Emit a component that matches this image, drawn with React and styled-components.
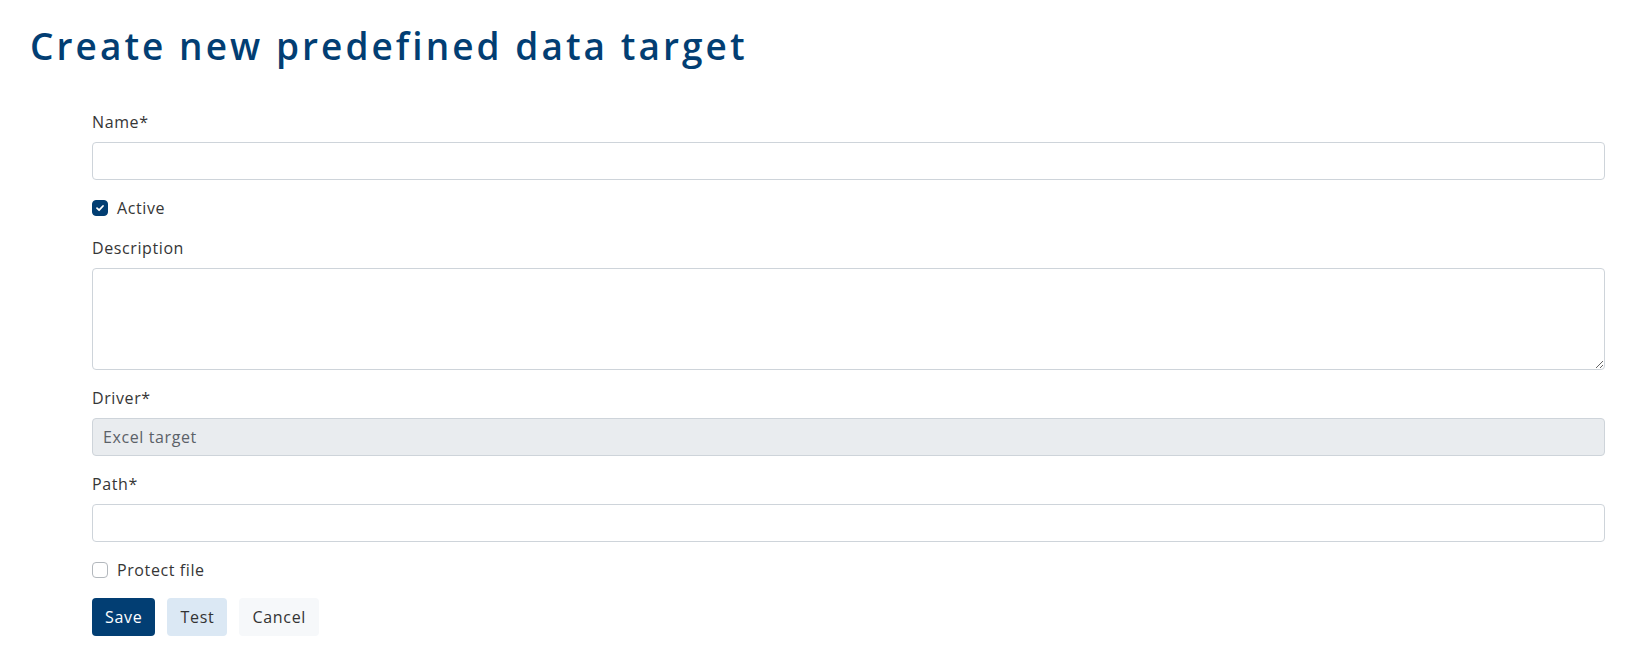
import React from 'react';
import styled, { createGlobalStyle } from 'styled-components';

const GlobalStyle = createGlobalStyle`
  html, body {
    margin: 0;
    padding: 0;
    background: #ffffff;
  }
  body {
    font-family: "Open Sans", "Liberation Sans", sans-serif;
    color: #333333;
  }
  * {
    box-sizing: border-box;
  }
`;

const Page = styled.div`
  padding: 24px 42px 20px 30px;
`;

const Title = styled.h1`
  margin: 0 0 43px;
  font-size: 37px;
  line-height: 43px;
  font-weight: 600;
  letter-spacing: 3.05px;
  color: #023e73;
`;

const Form = styled.form`
  display: flex;
  flex-direction: column;
  padding-left: 62px;
`;

const Field = styled.div`
  display: flex;
  flex-direction: column;
  margin-bottom: 16px;
`;

const Label = styled.label`
  font-size: 16px;
  line-height: 24px;
  letter-spacing: 0.6px;
  margin-bottom: 8px;
  color: #363636;
`;

const Input = styled.input`
  height: 38px;
  width: 100%;
  padding: 6px 10px;
  font: inherit;
  font-size: 16px;
  color: #495057;
  background: ${p => (p.disabled ? '#e9ecef' : '#ffffff')};
  border: 1px solid #ced4da;
  border-radius: 4px;
  outline: none;
  letter-spacing: 0.6px;

  &:disabled {
    color: #5b6168;
    opacity: 1;
  }
`;

const TextArea = styled.textarea`
  height: 102px;
  width: 100%;
  padding: 6px 10px;
  font: inherit;
  font-size: 16px;
  border: 1px solid #ced4da;
  border-radius: 4px;
  outline: none;
  resize: vertical;
  display: block;
`;

const CheckRow = styled.label`
  display: flex;
  align-items: center;
  gap: 9px;
  height: 24px;
  margin-bottom: 16px;
  font-size: 16px;
  letter-spacing: 0.6px;
  color: #363636;
  cursor: pointer;
`;

const Box = styled.span`
  width: 16px;
  height: 16px;
  border-radius: 4px;
  display: inline-flex;
  align-items: center;
  justify-content: center;
  background: ${p => (p.$checked ? '#023e73' : '#ffffff')};
  border: 1px solid ${p => (p.$checked ? '#023e73' : '#b3b8bd')};
`;

const Actions = styled.div`
  display: flex;
  gap: 12px;
`;

const variants = {
  primary: { bg: '#023e73', fg: '#ffffff' },
  light: { bg: '#dbe8f4', fg: '#333333' },
  plain: { bg: '#f6f8fa', fg: '#333333' },
};

const Button = styled.button`
  height: 38px;
  padding: 6px 13px;
  border: none;
  border-radius: 4px;
  font: inherit;
  font-size: 16px;
  letter-spacing: 0.7px;
  background: ${p => variants[p.$variant].bg};
  color: ${p => variants[p.$variant].fg};
  cursor: pointer;
`;

const Checkbox = ({ checked, children }) => (
  <CheckRow>
    <Box $checked={checked}>
      {checked && (
        <svg width="10" height="10" viewBox="0 0 10 10">
          <path d="M2 5.2 L4.1 7.2 L8 3" fill="none" stroke="#ffffff" strokeWidth="1.8" strokeLinecap="round" strokeLinejoin="round" />
        </svg>
      )}
    </Box>
    {children}
  </CheckRow>
);

export default function App() {
  return (
    <Page>
      <GlobalStyle />
      <Title>Create new predefined data target</Title>
      <Form onSubmit={e => e.preventDefault()}>
        <Field>
          <Label>Name*</Label>
          <Input type="text" />
        </Field>
        <Checkbox checked>Active</Checkbox>
        <Field>
          <Label>Description</Label>
          <TextArea />
        </Field>
        <Field>
          <Label>Driver*</Label>
          <Input type="text" value="Excel target" disabled readOnly />
        </Field>
        <Field>
          <Label>Path*</Label>
          <Input type="text" />
        </Field>
        <Checkbox checked={false}>Protect file</Checkbox>
        <Actions>
          <Button $variant="primary" type="submit">Save</Button>
          <Button $variant="light" type="button">Test</Button>
          <Button $variant="plain" type="button">Cancel</Button>
        </Actions>
      </Form>
    </Page>
  );
}
